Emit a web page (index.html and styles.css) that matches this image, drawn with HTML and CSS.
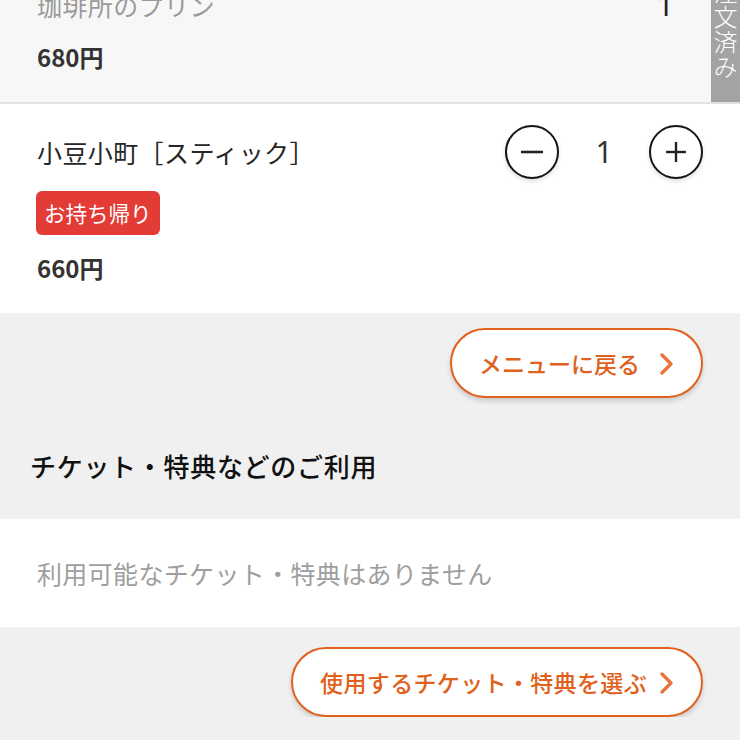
FILE: index.html
```html
<!DOCTYPE html>
<html lang="ja">
<head>
<meta charset="utf-8">
<title>注文確認</title>
<link rel="stylesheet" href="styles.css">
</head>
<body>
<div class="page">
  <div class="cart">
    <div class="item ordered">
      <div class="item-head">
        <div class="name">珈琲所のプリン</div>
        <div class="qty-only">1</div>
      </div>
      <div class="price">680円</div>
      <div class="ordered-tab"><span>注文済み</span></div>
    </div>
    <div class="item">
      <div class="item-head">
        <div class="name">小豆小町［スティック］</div>
        <div class="counter">
          <button class="round" aria-label="減らす">
            <svg width="24" height="24" viewBox="0 0 24 24"><line x1="1" y1="12" x2="23" y2="12" stroke="#222" stroke-width="2.6"/></svg>
          </button>
          <span class="count">1</span>
          <button class="round" aria-label="増やす">
            <svg width="22" height="22" viewBox="0 0 22 22"><line x1="1" y1="11" x2="21" y2="11" stroke="#222" stroke-width="2.4"/><line x1="11" y1="1" x2="11" y2="21" stroke="#222" stroke-width="2.4"/></svg>
          </button>
        </div>
      </div>
      <div class="tag">お持ち帰り</div>
      <div class="price">660円</div>
    </div>
  </div>

  <div class="actions first">
    <a class="pill" href="#">
      <span>メニューに戻る</span>
      <svg class="chev" width="14" height="22" viewBox="0 0 14 22"><polyline points="2,2 11,11 2,20" fill="none" stroke="#e8733a" stroke-width="3.2" stroke-linecap="round" stroke-linejoin="round"/></svg>
    </a>
  </div>

  <h2 class="section-title">チケット・特典などのご利用</h2>

  <div class="empty-band">利用可能なチケット・特典はありません</div>

  <div class="actions second">
    <a class="pill wide" href="#">
      <span>使用するチケット・特典を選ぶ</span>
      <svg class="chev" width="14" height="22" viewBox="0 0 14 22"><polyline points="2,2 11,11 2,20" fill="none" stroke="#e8733a" stroke-width="3.2" stroke-linecap="round" stroke-linejoin="round"/></svg>
    </a>
  </div>
</div>
</body>
</html>
```
FILE: styles.css
```css
* { box-sizing: border-box; }

html, body {
  margin: 0;
  padding: 0;
}

body {
  background: #f0f0f0;
  font-family: "Noto Sans CJK JP", "Noto Sans", sans-serif;
  color: #333;
  overflow: hidden;
}

.page {
  width: 740px;
}

.cart {
  margin-top: -43px;
}

.item {
  position: relative;
  background: #fff;
  padding: 30px 37px 29px 37px;
}

.item.ordered {
  background: #f7f7f7;
  border-bottom: 2px solid #e2e2e2;
  padding-right: 66px;
}

.item-head {
  display: flex;
  align-items: center;
  justify-content: space-between;
  height: 36px;
}

.name {
  font-size: 25px;
  line-height: 36px;
  color: #262626;
  letter-spacing: 0.4px;
}

.ordered .name {
  color: #9a9a9a;
}

.qty-only {
  font-family: "Noto Sans", "Roboto", sans-serif;
  font-size: 30px;
  line-height: 36px;
  color: #222;
  font-weight: 400;
}

.counter {
  display: flex;
  align-items: center;
}

.round {
  width: 54px;
  height: 54px;
  border-radius: 50%;
  border: 2px solid #151515;
  background: #fff;
  box-shadow: 0 2px 4px rgba(0, 0, 0, 0.14);
  display: flex;
  align-items: center;
  justify-content: center;
  padding: 0;
}

.count {
  width: 90px;
  text-align: center;
  font-family: "Noto Sans", "Roboto", sans-serif;
  font-size: 30px;
  font-weight: 400;
  color: #333;
  line-height: 36px;
}

.tag {
  display: inline-block;
  margin-top: 21px;
  height: 44px;
  line-height: 44px;
  padding: 0 8px 0 8px;
  background: #e33b36;
  color: #fff;
  font-size: 21.5px;
  border-radius: 6px;
  margin-left: -1px;
}

.price {
  margin-top: 17px;
  font-size: 24px;
  font-weight: 700;
  line-height: 32px;
  color: #333;
}

.ordered .price {
  margin-top: 18px;
}

.ordered-tab {
  position: absolute;
  top: 0;
  right: 0;
  bottom: 0;
  width: 29px;
  background: #a3a3a3;
  display: flex;
  align-items: center;
  justify-content: center;
}

.ordered-tab span {
  writing-mode: vertical-rl;
  color: #fff;
  font-size: 24px;
  line-height: 29px;
  letter-spacing: 1px;
  font-weight: 300;
}

.actions {
  display: flex;
  justify-content: flex-end;
  padding-right: 37px;
}

.actions.first {
  padding-top: 15px;
}

.actions.second {
  padding-top: 20px;
}

.pill {
  display: flex;
  align-items: center;
  height: 70px;
  border: 2px solid #e0601c;
  border-radius: 35px;
  background: #fff;
  box-shadow: 0 3px 5px rgba(0, 0, 0, 0.16);
  color: #e0601c;
  text-decoration: none;
  font-size: 23px;
  font-weight: 500;
  padding: 0 27px 0 27px;
}

.pill.wide span {
  letter-spacing: 0.35px;
}

.pill.wide .chev {
  margin-left: 13px;
}

.chev {
  margin-left: 20px;
  margin-top: 1px;
}

.section-title {
  margin: 50px 0 0 0;
  padding: 0 30px 35px 30px;
  font-size: 26px;
  line-height: 36px;
  font-weight: 500;
  letter-spacing: 0.7px;
  color: #111;
}

.empty-band {
  background: #fff;
  height: 108px;
  display: flex;
  align-items: center;
  padding-left: 37px;
  font-size: 25px;
  letter-spacing: 0.35px;
  color: #9e9e9e;
}
```
